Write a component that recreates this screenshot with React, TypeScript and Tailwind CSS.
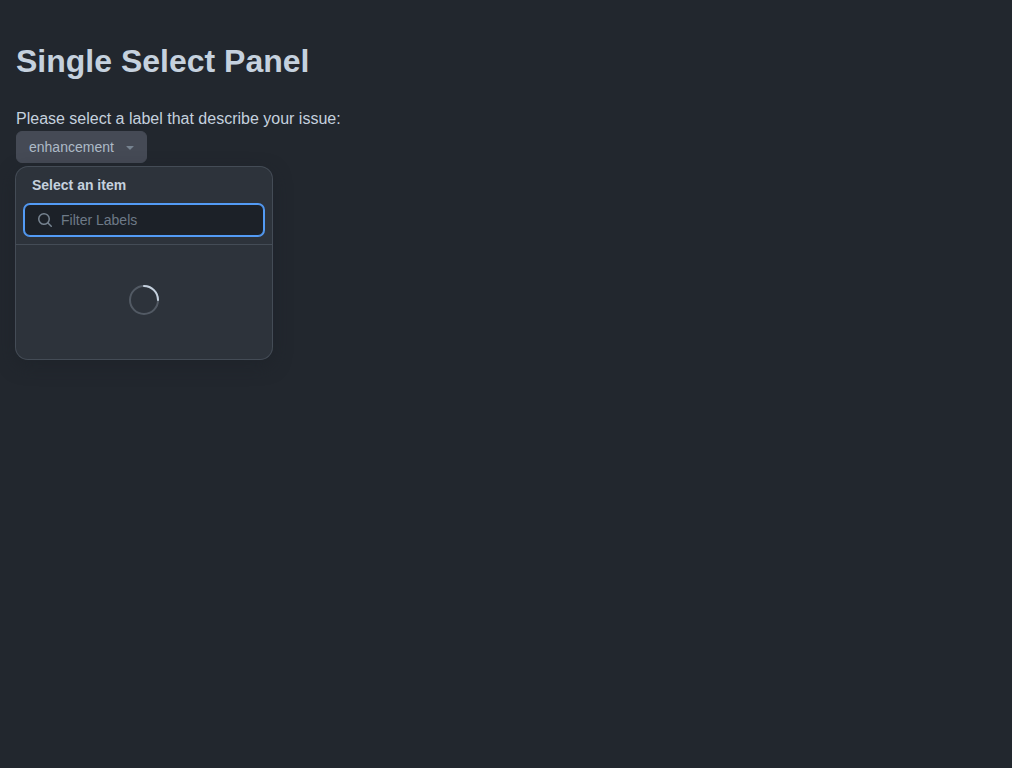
import React, { useState } from 'react';

function SearchIcon() {
  return (
    <svg viewBox="0 0 16 16" className="size-4 shrink-0 fill-current" aria-hidden="true">
      <path d="M10.68 11.74a6 6 0 0 1-7.922-8.982 6 6 0 0 1 8.982 7.922l3.04 3.04a.749.749 0 0 1-.326 1.275.749.749 0 0 1-.734-.215ZM11.5 7a4.499 4.499 0 1 0-8.997 0A4.499 4.499 0 0 0 11.5 7Z" />
    </svg>
  );
}

function TriangleDownIcon() {
  return (
    <svg viewBox="0 0 16 16" className="size-4 shrink-0 fill-current" aria-hidden="true">
      <path d="m4.427 7.427 3.396 3.396a.25.25 0 0 0 .354 0l3.396-3.396A.25.25 0 0 0 11.396 7H4.604a.25.25 0 0 0-.177.427Z" />
    </svg>
  );
}

function Spinner() {
  return (
    <svg viewBox="0 0 16 16" fill="none" className="size-8" role="img" aria-label="Loading">
      <circle cx="8" cy="8" r="7" stroke="currentColor" strokeOpacity="0.25" strokeWidth="2" vectorEffect="non-scaling-stroke" />
      <path d="M15 8a7.002 7.002 0 00-7-7" stroke="currentColor" strokeWidth="2" strokeLinecap="round" vectorEffect="non-scaling-stroke" />
    </svg>
  );
}

function SelectPanel() {
  const [filter, setFilter] = useState('');
  return (
    <div
      role="dialog"
      aria-labelledby="panel-title"
      className="absolute top-full left-0 z-10 mt-1 flex h-48 w-64 flex-col rounded-xl bg-[#2d333b] shadow-[0_0_0_1px_#444c56,0_6px_18px_#1c212899]"
    >
      <div className="flex flex-col gap-2 border-b border-[#444c56] p-2">
        <h2 id="panel-title" className="px-2 text-sm leading-[21px] font-bold">
          Select an item
        </h2>
        <label className="flex h-8 items-center gap-2 rounded-md border border-[#539bf5] bg-[#1c2128] px-3 text-[#768390] ring-1 ring-[#539bf5]">
          <SearchIcon />
          <input
            type="text"
            aria-label="Filter Labels"
            placeholder="Filter Labels"
            value={filter}
            onChange={(e) => setFilter(e.target.value)}
            className="min-w-0 flex-1 bg-transparent text-sm text-[#c5d1de] outline-none placeholder:text-[#6e7a87]"
          />
        </label>
      </div>
      <div className="flex flex-1 items-center justify-center pb-1">
        <Spinner />
      </div>
    </div>
  );
}

export default function App() {
  const [open, setOpen] = useState(true);
  return (
    <main className="min-h-screen bg-[#22272e] p-4 font-['Liberation_Sans',Arial,sans-serif] text-base text-[#c5d1de]">
      <h1 className="mt-[21px] mb-[22px] text-[32px] leading-[48px] font-bold">Single Select Panel</h1>
      <p>Please select a label that describe your issue:</p>
      <div className="relative w-fit">
        <button
          type="button"
          aria-haspopup="true"
          aria-expanded={open}
          onClick={() => setOpen(!open)}
          className="flex h-8 items-center gap-2 rounded-md border border-[#454a55] bg-[#454a55] pr-2 pl-3 text-sm text-[#adbac7]"
        >
          enhancement
          <span className="text-[#768390]">
            <TriangleDownIcon />
          </span>
        </button>
        {open && <SelectPanel />}
      </div>
    </main>
  );
}
